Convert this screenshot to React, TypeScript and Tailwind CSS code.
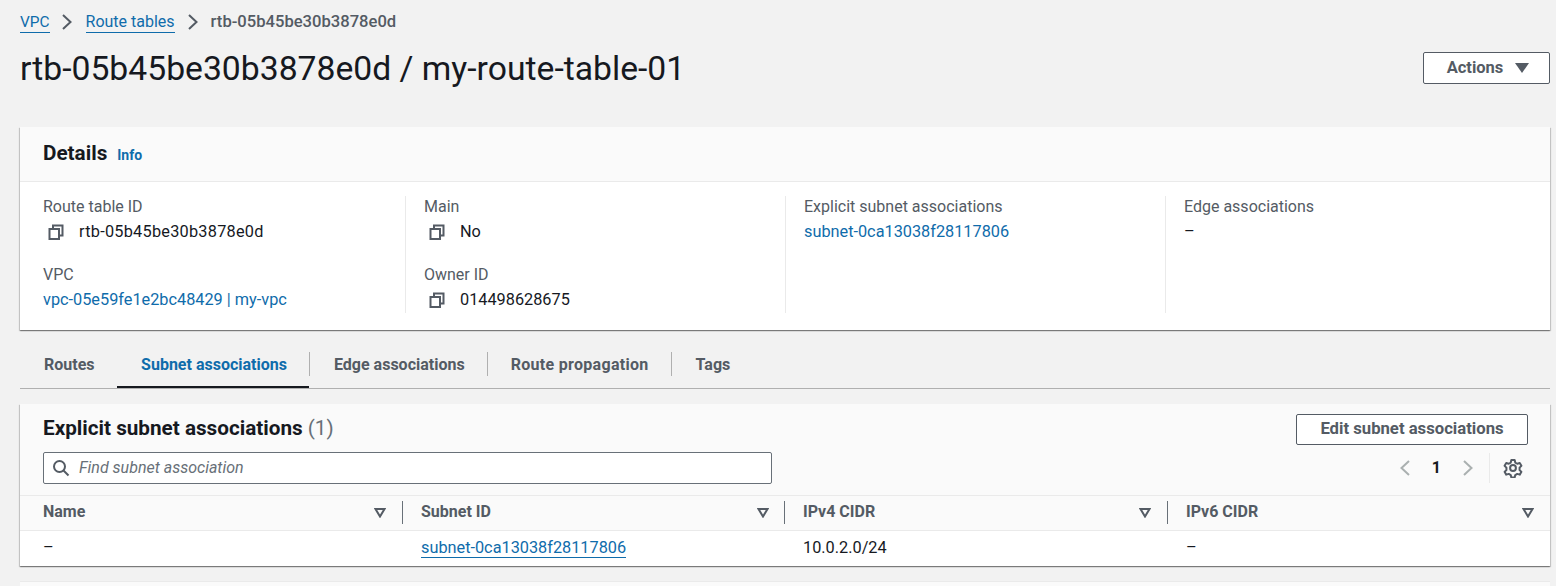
import React from "react";

const font = "font-['Roboto',sans-serif]";

const CopyIcon = () => (
  <svg width="16" height="16" viewBox="0 0 16 16" fill="none" stroke="#545b64" strokeWidth="2" className="shrink-0">
    <rect x="1.5" y="5" width="9.5" height="10" fill="none" />
    <path d="M5 5V1.5h9.5V11.5H11" />
  </svg>
);

const Chevron = ({ left = false, color = "#545b64" }: { left?: boolean; color?: string }) => (
  <svg width="14" height="18" viewBox="0 0 14 18" fill="none" stroke={color} strokeWidth="2">
    <path d={left ? "M11 2 3.5 9l7.5 7" : "M3 2l7.5 7L3 16"} />
  </svg>
);

const SortIcon = () => (
  <svg width="12" height="10" viewBox="0 0 12 10" fill="none" stroke="#545b64" strokeWidth="2">
    <path d="M1.5 1h9L6 8.5z" />
  </svg>
);

const Field = ({
  label,
  value,
  copy = false,
  link = false,
  wide = false,
}: {
  label: string;
  value: string;
  copy?: boolean;
  link?: boolean;
  wide?: boolean;
}) => (
  <div className="h-[68px]">
    <div className="text-[16px] leading-[22px] text-[#545b64]">{label}</div>
    <div
      className={`mt-[3px] flex items-center text-[16.3px] leading-[22px] ${
        link ? "text-[#0f6cab]" : "text-[#16191f]"
      } ${wide ? "tracking-[0.25px]" : ""}`}
    >
      {copy && (
        <span className="ml-[5px] mr-[15px] flex">
          <CopyIcon />
        </span>
      )}
      {value}
    </div>
  </div>
);

const columns = ["Name", "Subnet ID", "IPv4 CIDR", "IPv6 CIDR"];

const App = () => {
  return (
    <div className={`h-[586px] w-[1556px] overflow-hidden bg-[#f2f2f2] pl-[20px] pr-[6px] ${font}`}>
      <nav className="flex h-[42px] items-center pt-[2px] text-[16px]">
        <a className="border-b border-[#0f6cab] text-[15.4px] leading-[20px] text-[#0f6cab]">VPC</a>
        <span className="ml-[10px] mr-[12px] flex">
          <Chevron />
        </span>
        <a className="border-b border-[#0f6cab] leading-[20px] text-[#0f6cab]">Route tables</a>
        <span className="ml-[11px] mr-[11px] flex">
          <Chevron />
        </span>
        <span className="text-[16.6px] font-medium text-[#545b64]">rtb-05b45be30b3878e0d</span>
      </nav>

      <div className="flex h-[52px] items-center justify-between">
        <h1 className="pt-[2px] text-[33.7px] font-normal leading-[40px] text-[#16191f]">
          rtb-05b45be30b3878e0d / my-route-table-01
        </h1>
        <button className="flex h-[32px] w-[127px] items-center justify-center gap-[12px] rounded-[2px] border border-[#545b64] bg-white pl-[3px] text-[16.5px] font-bold text-[#545b64]">
          Actions
          <svg width="14" height="10" viewBox="0 0 14 10" fill="#545b64">
            <path d="M0 0h14L7 10z" />
          </svg>
        </button>
      </div>

      <section className="mt-[33px] h-[203px] bg-white shadow-[0_1px_1px_0_rgba(0,0,0,0.3),1px_1px_1px_0_rgba(0,0,0,0.15),-1px_1px_1px_0_rgba(0,0,0,0.15)]">
        <div className="flex h-[55px] items-center gap-[10px] border-b border-[#eaeaea] bg-[#fafafa] pl-[23px]">
          <h2 className="text-[20.7px] font-bold text-[#16191f]">Details</h2>
          <a className="pt-[3px] text-[14px] font-bold text-[#0f6cab]">Info</a>
        </div>
        <div className="grid grid-cols-[385px_380px_380px_1fr] pt-[14px]">
          <div className="pl-[23px]">
            <Field label="Route table ID" value="rtb-05b45be30b3878e0d" copy wide />
            <Field label="VPC" value="vpc-05e59fe1e2bc48429 | my-vpc" link />
          </div>
          <div className="h-[117px] border-l border-[#eaeaea] pl-[18px]">
            <Field label="Main" value="No" copy />
            <Field label="Owner ID" value="014498628675" copy />
          </div>
          <div className="h-[117px] border-l border-[#eaeaea] pl-[18px]">
            <Field label="Explicit subnet associations" value="subnet-0ca13038f28117806" link />
          </div>
          <div className="h-[117px] border-l border-[#eaeaea] pl-[18px]">
            <Field label="Edge associations" value="–" />
          </div>
        </div>
      </section>

      <div className="mt-[21px] flex h-[38px] items-start border-b border-[#b0b0b0] text-[16px] font-bold text-[#545b64]">
        <div className="flex h-[26px] w-[97px] items-center pl-[24px] pt-[1px]">Routes</div>
        <div className="flex h-[37px] w-[192px] items-start justify-center border-b-[2px] border-[#16191f] pl-[2px] text-[#0f6cab]">
          <span className="flex h-[26px] items-center pt-[1px]">Subnet associations</span>
        </div>
        <div className="flex h-[26px] items-center">
          <span className="h-[24px] w-px bg-[#b0b0b0]" />
          <span className="pl-[24px] pr-[22px] pt-[1px]">Edge associations</span>
        </div>
        <div className="flex h-[26px] items-center">
          <span className="h-[24px] w-px bg-[#b0b0b0]" />
          <span className="pl-[23px] pr-[22px] pt-[1px] tracking-[0.3px]">Route propagation</span>
        </div>
        <div className="flex h-[26px] items-center">
          <span className="h-[24px] w-px bg-[#b0b0b0]" />
          <span className="pl-[24px] pr-[24px] pt-[1px]">Tags</span>
        </div>
      </div>

      <section className="mt-[15px] h-[162px] bg-white shadow-[0_1px_1px_0_rgba(0,0,0,0.3),1px_1px_1px_0_rgba(0,0,0,0.15),-1px_1px_1px_0_rgba(0,0,0,0.15)]">
        <div className="h-[91px] bg-[#fafafa] pl-[23px] pr-[22px]">
          <div className="flex h-[48px] items-center justify-between">
            <h2 className="pt-[2px] text-[20.7px] font-bold text-[#16191f]">
              Explicit subnet associations <span className="font-normal text-[#687078]">(1)</span>
            </h2>
            <button className="mt-[2px] flex h-[31px] w-[232px] items-center justify-center rounded-[2px] border border-[#545b64] bg-white text-[16.7px] font-bold text-[#545b64]">
              Edit subnet associations
            </button>
          </div>
          <div className="flex items-center justify-between">
            <div className="flex h-[32px] w-[729px] items-center rounded-[2px] border border-[#687078] bg-white pl-[8px]">
              <svg width="18" height="18" viewBox="0 0 18 18" fill="none" stroke="#545b64" strokeWidth="2">
                <circle cx="7.5" cy="7.5" r="5.5" />
                <path d="m11.5 11.5 5 5" />
              </svg>
              <span className="ml-[9px] text-[16px] italic text-[#687078]">Find subnet association</span>
            </div>
            <div className="flex items-center">
              <Chevron left color="#aab0b0" />
              <span className="mx-[20px] text-[16px] font-bold text-[#16191f]">1</span>
              <Chevron color="#aab0b0" />
              <span className="ml-[14px] mr-[13px] h-[30px] w-px bg-[#eaeaea]" />
              <svg width="20" height="20" viewBox="0 0 24 24" fill="none" stroke="#545b64" strokeWidth="2.4" strokeLinejoin="round" className="mr-[5px]">
                <path d="M10 2.5h4l.7 3 2.4 1.4 3-.9 2 3.4-2.2 2.2v2.8l2.2 2.2-2 3.4-3-.9-2.4 1.4-.7 3h-4l-.7-3-2.4-1.4-3 .9-2-3.4 2.2-2.2v-2.8L1.9 9.4l2-3.4 3 .9 2.4-1.4z" />
                <circle cx="12" cy="12" r="3.5" />
              </svg>
            </div>
          </div>
        </div>
        <div className="grid h-[36px] grid-cols-[383px_382px_383px_1fr] border-y border-[#eaeaea] bg-[#fafafa] pb-[2px] text-[16px] font-bold text-[#545b64]">
          {columns.map((col, i) => (
            <div key={col} className={`flex items-center ${i === 0 ? "pl-[23px]" : "pl-[18px]"} pr-[16px]`}>
              <span className="flex-1">{col}</span>
              <span className="flex pt-[2px]">
                <SortIcon />
              </span>
              {i < 3 && (
                <span className={`${i === 1 ? "ml-[15px]" : "ml-[16px]"} mr-[-16px] h-[23px] w-px bg-[#687078]`} />
              )}
            </div>
          ))}
        </div>
        <div className="grid h-[35px] grid-cols-[383px_382px_383px_1fr] items-center text-[16.3px] text-[#16191f]">
          <div className="pl-[23px]">–</div>
          <div className="pl-[18px]">
            <a className="border-b border-[#0f6cab] text-[#0f6cab]">subnet-0ca13038f28117806</a>
          </div>
          <div className="pl-[18px]">10.0.2.0/24</div>
          <div className="pl-[18px]">–</div>
        </div>
      </section>

      <section className="mt-[15px] h-[40px] border-t border-[#eaeaea] bg-[#fafafa]" />
    </div>
  );
};

export default App;
